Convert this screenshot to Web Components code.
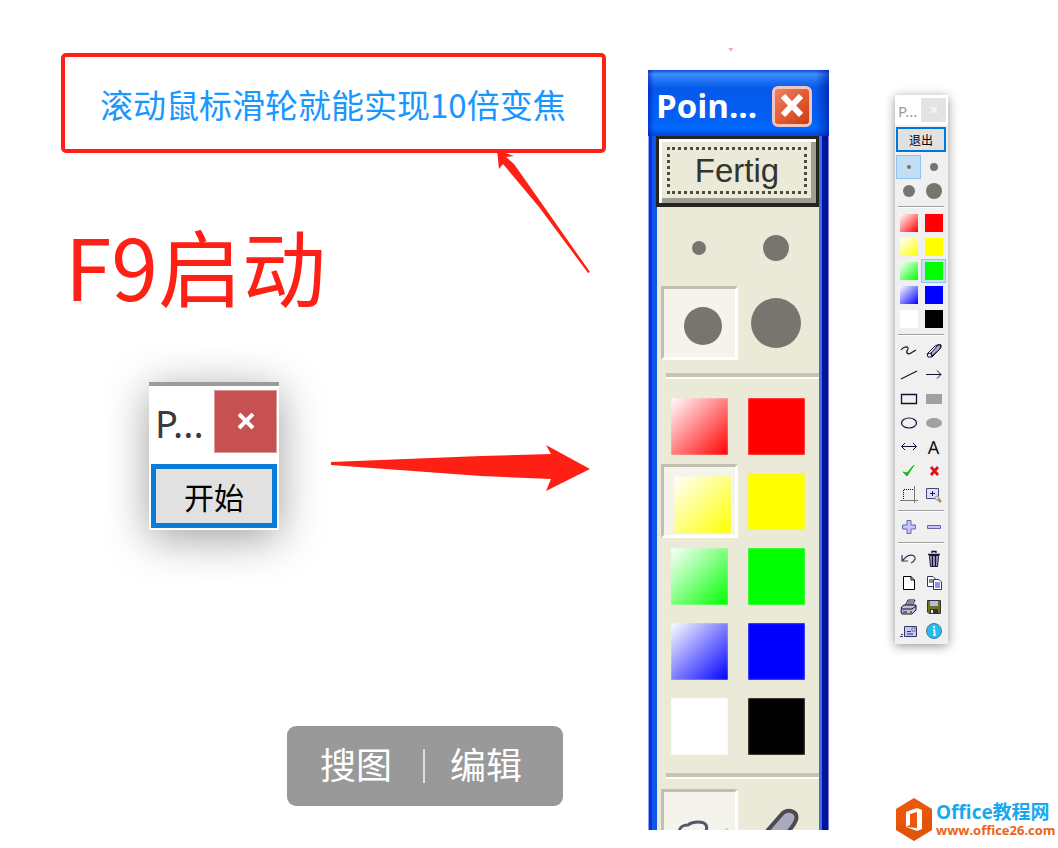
<!DOCTYPE html>
<html lang="zh-CN">
<head>
<meta charset="utf-8">
<title>PointerStick</title>
<style>
body { margin: 0; background: #fff; font-family: "Noto Sans", "Noto Sans CJK SC", sans-serif; }
</style>
</head>
<body>
<guide-page></guide-page>
<script>
function define(name, html) {
  const template = document.createElement('template');
  template.innerHTML = html;
  customElements.define(name, class extends HTMLElement {
    constructor() {
      super();
      this.attachShadow({ mode: 'open' }).append(template.content.cloneNode(true));
    }
  });
}

/* Red framed note */
define('note-box', `
<style>
:host { display: block; box-sizing: border-box; border: 4px solid #ff2015; border-radius: 5px; padding: 27px 35px 25px; }
p { margin: 0; font: 33px/40px "Noto Sans CJK SC", sans-serif; color: #1a96ff; white-space: nowrap; }
</style>
<p><slot></slot></p>`);

/* Small start window */
define('start-window', `
<style>
:host { display: block; box-sizing: border-box; width: 130px; border-top: 4px solid #9b9b9b; background: #fff; padding: 4px 2px 2px; box-shadow: 0 8px 44px rgba(0,0,0,.38); }
header { display: flex; justify-content: space-between; align-items: center; margin-bottom: 11px; }
span { padding: 4px 0 0 4px; font: 38px/59px "Noto Sans", sans-serif; color: #3b3b3b; }
button { font: inherit; margin: 0; padding: 0; box-sizing: border-box; }
.close { width: 63px; height: 63px; border: 1px solid #dc9a9a; background: #c75050; display: grid; place-items: center; }
.start { display: block; width: 100%; height: 64px; border: 5px solid #0b7bd9; background: #e1e1e1; font: 30px/50px "Noto Sans CJK SC", sans-serif; color: #000; }
</style>
<header><span>P...</span><button class="close" aria-label="关闭"><svg width="18" height="18" viewBox="0 0 18 18"><path d="M2 1L16 15M16 1L2 15" stroke="#fff" stroke-width="4"/></svg></button></header>
<button class="start"><slot></slot></button>`);

/* Grey hover bar with two actions */
define('action-bar', `
<style>
:host { display: flex; align-items: center; box-sizing: border-box; width: 276px; height: 80px; border-radius: 9px; background: #999; padding: 0 33px 6px; }
button { margin: 0; padding: 0; border: 0; background: none; color: #fff; font: 36px/44px "Noto Sans CJK SC", sans-serif; white-space: nowrap; }
i { width: 2px; height: 34px; margin: 6px 25px 0 31px; background: #ddd; }
</style>
<button>搜图</button><i></i><button>编辑</button>`);

/* One cell of the large palette; "pressed" sinks it */
define('xp-tool', `
<style>
:host { display: block; height: 75px; }
button { display: grid; place-items: center; box-sizing: border-box; width: 77px; height: 74px; margin: 0; padding: 0; border: 3px solid transparent; background: none; }
:host([pressed]) button { border-color: #c3bfae #fff #fff #c3bfae; background: #f4f3ec; padding: 6px 0 0 6px; }
</style>
<button aria-label="工具"><slot></slot></button>`);

define('xp-window', `
<style>
:host { display: block; box-sizing: border-box; width: 181px; background: linear-gradient(90deg, #8f9ff0 0 1px, #0932dc 1px 4px, #1157e8 4px 9px, #ebe9d8 9px 171px, #3c70df 171px 174px, #00139e 174px 180px, #7779c8 180px); }
header { display: flex; align-items: center; justify-content: space-between; height: 66px; box-sizing: border-box; padding: 6px 17px 0 8px; background: linear-gradient(90deg, rgba(0,0,160,.45), transparent 6px 168px, rgba(0,0,140,.5)), linear-gradient(#1247d8, #3e90fb 4px, #2579f5 9px, #0559ea 18px, #0560f4 48px, #006aff 58px, #0345dc); }
strong { font: bold 33px/40px "Open Sans", sans-serif; color: #fff; }
button { margin: 0; padding: 0; box-sizing: border-box; }
.close { width: 40px; height: 41px; border: 3px solid #f3c3bd; border-radius: 6px; background: linear-gradient(135deg, #e98365, #e2582f 55%, #c83d16); display: grid; place-items: center; }
.done { display: block; width: 163px; height: 71px; margin-left: 8px; border: 3px solid #25251f; border-bottom-width: 4px; box-shadow: inset 3px 3px #fff, inset -5px -5px #a19f92; background: #ebe9d8; padding: 8px 9px 9px 8px; }
.done span { display: block; box-sizing: border-box; border: 3px dotted #4b4a43; font: 33px/42px "Liberation Sans", sans-serif; height: 47px; color: #34342f; }
.grid { display: grid; grid-template-columns: 77px 77px; margin-left: 13px; }
.dots { padding: 4px 0 3px; }
hr { margin: 9px 10px 10px 18px; border: 0; height: 6px; background: linear-gradient(#c7c4b2 4px, #fff 4px); }
.sw { width: 57px; height: 57px; box-shadow: inset 0 0 2px rgba(235,233,216,.9); }
.peek { height: 41px; overflow: hidden; }
svg { display: block; }
</style>
<header><strong>Poin...</strong><button class="close" aria-label="关闭"><svg width="24" height="24" viewBox="0 0 24 24"><path d="M3 2L21 21M21 2L3 21" stroke="#fff" stroke-width="6"/></svg></button></header>
<button class="done"><span>Fertig</span></button>
<div class="grid dots">
<xp-tool><svg width="56" height="56"><circle cx="27" cy="28" r="7" fill="#78756e"/></svg></xp-tool>
<xp-tool><svg width="56" height="56"><circle cx="27" cy="28" r="13" fill="#78756e"/></svg></xp-tool>
<xp-tool pressed><svg width="56" height="56"><circle cx="28" cy="28" r="19" fill="#78756e"/></svg></xp-tool>
<xp-tool><svg width="56" height="56"><circle cx="27" cy="28" r="25" fill="#78756e"/></svg></xp-tool>
</div>
<hr>
<div class="grid swatches"></div>
<hr>
<div class="grid peek">
<xp-tool pressed><svg width="60" height="56" viewBox="0 0 60 56"><path d="M6 33C6 26 9 24 15 24C20 20 31 20 33 24C35 28 33 33 27 40" fill="none" stroke="#55536f" stroke-width="3"/><path d="M50 32L55 28" stroke="#cdcbe0" stroke-width="3"/></svg></xp-tool>
<xp-tool><svg width="60" height="60" viewBox="0 0 60 60"><path d="M14 42L34 19Q38 14 44 15Q51 17 49 24Q47 31 26 52L12 54Z" fill="#a9a9c0" stroke="#4c4b50" stroke-width="4"/></svg></xp-tool>
</div>`);

/* Narrow current-version palette */
define('palette-tool', `
<style>
:host { display: block; }
button { display: grid; place-items: center; box-sizing: border-box; width: 25px; height: 24px; margin: 0; padding: 0; border: 1px solid transparent; background: none; color: #111; font: 18px/22px "Noto Sans", sans-serif; }
:host([pressed]) button { border-color: #90c2ee; background: #c3dff5; }
</style>
<button aria-label="工具"><slot></slot></button>`);

define('tool-palette', `
<style>
:host { display: block; box-sizing: border-box; width: 53px; padding: 3px 2px 1px 1px; background: #f0f0f0; box-shadow: 0 2px 10px rgba(0,0,0,.42); }
header { display: flex; justify-content: space-between; margin: -3px -2px 2px -1px; padding: 3px 2px 3px 3px; background: #fff; font: 15px/26px "Noto Sans", sans-serif; height: 24px; color: #999; }
button { margin: 0; padding: 0; box-sizing: border-box; }
.close { width: 25px; height: 24px; border: 0; background: #e3e3e3; display: grid; place-items: center; }
.exit { display: block; width: 50px; height: 25px; border: 2px solid #0078d7; background: #e1e1e1; font: 12px/20px "Noto Sans CJK SC", sans-serif; color: #000; margin-bottom: 3px; }
.grid { display: grid; grid-template-columns: 25px 25px; }
hr { margin: 3px 2px; border: 0; height: 2px; background: linear-gradient(#a0a0a0 1px, #fff 1px); }
svg { display: block; }
.sw { width: 18px; height: 18px; }
</style>
<header><span>P...</span><button class="close" aria-label="关闭"><svg width="8" height="8"><path d="M1 1L7 7M7 1L1 7" stroke="#f4f4f4" stroke-width="2"/></svg></button></header>
<button class="exit">退出</button>
<div class="groups"></div>`);

define('site-logo', `
<style>
:host { display: flex; align-items: center; gap: 3px; }
.name { display: grid; }
a { color: #e8641b; text-decoration: none; font: bold 13px/16px "Open Sans", sans-serif; white-space: nowrap; }
strong { font: bold 19px/20px "Open Sans", "Noto Sans CJK SC", sans-serif; color: #19a8ee; }
svg { flex: none; }
</style>
<svg width="38" height="44" viewBox="0 0 38 44"><path d="M19 0L37 11V32L19 43L1 32V11Z" fill="#e9590c"/><path d="M19 43L1 32V26L19 31L37 12V32Z" fill="#d54b08" opacity=".35"/><path d="M11 14L22 10L27 12V31L22 33L11 29L22 30V14L15 16V27L11 29Z" fill="#fff"/></svg>
<div class="name"><strong>Office教程网</strong><a href="#">www.office26.com</a></div>`);

define('guide-page', `
<style>
:host { display: grid; grid-template-columns: minmax(587px, 1fr) 181px 229px; min-height: 100vh; }
.notes { padding: 53px 42px 41px 61px; }
.lead { display: flex; justify-content: space-between; align-items: flex-start; height: 229px; }
h1 { margin: 0; padding: 67px 0 0 4px; font: 84px/90px "Noto Sans CJK SC", sans-serif; color: #ff2015; white-space: nowrap; }
.lead svg { margin-right: 16px; }
.start { display: flex; align-items: center; gap: 52px; margin: 0 0 196px 88px; }
.start svg { margin-top: 24px; }
svg { display: block; flex: none; overflow: visible; }
action-bar { margin-left: 226px; }
.classic { padding-top: 46px; }
.classic svg { margin: 0 auto 18px 79px; }
.side { display: flex; flex-direction: column; justify-content: space-between; align-items: flex-start; padding: 95px 0 6px 66px; }
</style>
<section class="notes">
<note-box>滚动鼠标滑轮就能实现10倍变焦</note-box>
<div class="lead"><h1>F9启动</h1><svg width="94" height="121" viewBox="0 0 94 121"><path d="M1 -3L18 3L10 4L18 11L94 119L92 120L43 54L7 11L3 16Z" fill="#ff2015"/></svg></div>
<div class="start"><start-window>开始</start-window><svg width="259" height="46" viewBox="0 0 259 46"><path d="M0 17L150 11L220 9L215 0L259 24L215 46L220 34L150 31L0 20Z" fill="#ff2015"/></svg></div>
<action-bar></action-bar>
</section>
<section class="classic"><svg width="6" height="6"><path d="M1 2H6L4 6L3 4Z" fill="#f5a5ad"/></svg><xp-window></xp-window></section>
<section class="side"><tool-palette></tool-palette><site-logo></site-logo></section>`);

const COLORS = ['#f00', '#ff0', '#0f0', '#00f'];
function swatch(fill) {
  const d = document.createElement('div');
  d.className = 'sw';
  d.style.background = fill;
  return d;
}
function cell(tag, content, pressed) {
  const t = document.createElement(tag);
  if (pressed) t.setAttribute('pressed', '');
  if (typeof content === 'string') t.innerHTML = content; else t.append(content);
  return t;
}
const fills = [...COLORS.flatMap(c => ['linear-gradient(135deg,#fff,' + c + ')', c]), '#fff', '#000'];

const page = document.querySelector('guide-page').shadowRoot;
const xp = page.querySelector('xp-window').shadowRoot;
fills.forEach((f, i) => xp.querySelector('.swatches').append(cell('xp-tool', swatch(f), i === 2)));

const icon = body => '<svg width="18" height="18" viewBox="0 0 18 18" fill="none" stroke="#111133">' + body + '</svg>';
const dot = r => icon('<circle cx="9" cy="9" r="' + r + '" fill="#78756e" stroke="none"/>');
const groups = [
  [dot(2), dot(4), dot(6), dot(8)],
  fills.map(swatch),
  [
    icon('<path d="M1 8C4 4 9 4 8 7C5 11 8 13 11 11L16 8" stroke-width="1.2"/>'),
    icon('<path d="M2 12L10 4Q13 2 16 3Q17 5 14 8L7 15H3Z" fill="#fff"/><path d="M6 11L13 3L16 3L15 7L7 14Z" fill="#a7a7bd"/><path d="M2 12L6 11L7 15"/>'),
    icon('<path d="M1 13L17 5" stroke-width="1.2"/>'),
    icon('<path d="M1 8.500H16M12 4.500L16 8.500L12 12.500"/>'),
    icon('<path d="M1.500 4.500H16.500V13.500H1.500Z" stroke-width="1.300"/>'),
    icon('<path d="M1 4H17V14H1Z" fill="#a0a0a0" stroke="none"/>'),
    icon('<ellipse cx="9" cy="9" rx="7.500" ry="5" stroke-width="1.200"/>'),
    icon('<ellipse cx="9" cy="9" rx="8" ry="5" fill="#a0a0a0" stroke="none"/>'),
    icon('<path d="M2 8.500H16M5 5L1.500 8.500L5 12M13 5L16.500 8.500L13 12"/>'),
    '<span>A</span>',
    icon('<path d="M3 10L7 14L14 3L7 11Z" fill="#10bd16" stroke="#10bd16"/>'),
    icon('<path d="M6 5L13 13M13 5L6 13" stroke="#df1119" stroke-width="2.800"/>'),
    icon('<path d="M3.500 15V3.500H14" stroke="#111" stroke-dasharray="1 1"/><path d="M0 14.500H18M14.500 0V17" stroke="#777"/>'),
    icon('<path d="M1.500 2.500H13.500V12.500H1.500Z" fill="#dedeff" stroke="#47477c"/><path d="M7.500 5V10M5 7.500H10" stroke="#222"/><path d="M12 12L16 16" stroke="#a98a50" stroke-width="2.500"/><circle cx="12" cy="12" r="2" fill="#ddd" stroke="#999"/>')
  ],
  [
    icon('<path d="M7 2.500H11V7H15.500V11H11V15.500H7V11H2.500V7H7Z" fill="#c3c3ff" stroke="#6666a5"/>'),
    icon('<path d="M2.500 7.500H15.500V10.500H2.500Z" fill="#c3c3ff" stroke="#6666a5"/>')
  ],
  [
    icon('<path d="M2 5V11H8M2 11L6 7C10 4 16 5 15 9Q14 12 11 13" stroke="#37375e" stroke-width="1.200"/>'),
    icon('<path d="M4.500 5.500H13.500L12.500 16.500H5.500Z" fill="#aaaabd"/><path d="M7.500 6V16M10.500 6V16M3 4.500H15M7 3V1.500H11V3" stroke-width="1.300"/>'),
    icon('<path d="M3.500 2.500H11L14.500 6V15.500H3.500ZM11 2.500V6H14" fill="#fff" stroke="#000"/>'),
    icon('<path d="M2.500 2.500H8L10.500 5V12.500H2.500Z" fill="#fff" stroke="#333366"/><path d="M4 6H8M4 8H8"/><path d="M8.500 5.500H14L16.500 8V15.500H8.500Z" fill="#fff" stroke="#2525bb"/><path d="M10 9H15M10 11H15M10 13H15" stroke="#2525bb"/>'),
    icon('<path d="M5 8L8 2H15L12 8Z" fill="#fff"/><path d="M8 4H13M7 6H12"/><path d="M1.500 9L4 7H16V12L12 16H2L1 14Z" fill="#bdbddd"/><path d="M2 11H12L16 8M3 14H12"/><path d="M7 14H10" stroke="#dada31" stroke-width="2"/>'),
    icon('<path d="M2.500 2.500H15.500V15.500H4L2.500 14Z" fill="#70711e" stroke="#333"/><path d="M5 3H13V8H5Z" fill="#b9b9e8" stroke="none"/><path d="M5 11H13V15H5Z" fill="#333" stroke="none"/><path d="M6 12H8V15H6Z" fill="#eee" stroke="none"/>'),
    icon('<path d="M4.500 4.500H16.500V14.500H4.500Z" fill="#c7c7fa" stroke="#333366"/><path d="M12 6H15V9H12Z" fill="#f5f5ff" stroke="#66668c"/><path d="M7 9.500H11M7 12H13M0 14.500H3M1 12.500H3" stroke="#333366"/>'),
    icon('<circle cx="9" cy="9" r="7.500" fill="#23bdf2" stroke="#52778c"/><path d="M8 8H9.500V13M8 13H11" stroke="#fff" stroke-width="1.500"/><circle cx="9" cy="5" r="1.200" fill="#fff" stroke="none"/>')
  ]
];
const holder = page.querySelector('tool-palette').shadowRoot.querySelector('.groups');
groups.forEach((items, g) => {
  if (g) holder.append(document.createElement('hr'));
  const grid = document.createElement('div');
  grid.className = 'grid';
  items.forEach((c, i) => grid.append(cell('palette-tool', c, (g === 0 && i === 0) || (g === 1 && i === 5))));
  holder.append(grid);
});
</script>
</body>
</html>
